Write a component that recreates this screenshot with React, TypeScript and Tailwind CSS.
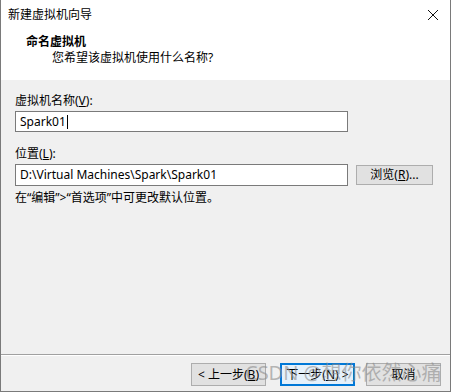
import React from 'react';

const font = { fontFamily: '"Noto Sans", "Noto Sans CJK SC", sans-serif' };

function Btn({ children, focused }: { children: React.ReactNode; focused?: boolean }) {
  return (
    <div
      className={
        'flex h-[23px] w-[75px] items-center justify-center text-[12px] text-black ' +
        (focused ? 'border-2 border-[#0078d7] bg-[#e5f1fb]' : 'border border-[#adadad] bg-[#e1e1e1]')
      }
    >
      {children}
    </div>
  );
}

export default function App() {
  return (
    <div
      className="relative flex h-[392px] w-[451px] flex-col border-x border-b border-[#7a7a7a] bg-[#f0f0f0] text-[12px] leading-[16px] text-black"
      style={font}
    >
      <div className="flex h-[80px] flex-col bg-white">
        <div className="flex h-[29px] items-center justify-between pl-[7px] pr-[10px]">
          <span>新建虚拟机向导</span>
          <svg width="12" height="12" viewBox="0 0 12 12" className="mr-[1px]">
            <path d="M1 1 L11 11 M11 1 L1 11" stroke="#111" strokeWidth="1" fill="none" />
          </svg>
        </div>
        <div className="pl-[25px] pt-[5px] font-bold">命名虚拟机</div>
        <div className="pl-[51px]">您希望该虚拟机使用什么名称?</div>
      </div>

      <div className="flex flex-1 flex-col px-[14px]">
        <div className="mt-[13px] mb-[2px]">
          虚拟机名称(<span className="underline">V</span>):
        </div>
        <div className="flex h-[21px] w-[333px] items-center border border-[#7a7a7a] bg-white px-[4px]">
          Spark01<span className="ml-[1px] inline-block h-[14px] w-px bg-black" />
        </div>

        <div className="mt-[14px] mb-[2px]">
          位置(<span className="underline">L</span>):
        </div>
        <div className="flex items-center gap-[8px]">
          <div className="flex h-[22px] w-[333px] items-center border border-[#7a7a7a] bg-white px-[4px]">
            D:\Virtual Machines\Spark\Spark01
          </div>
          <div className="flex h-[20px] w-[77px] items-center justify-center border border-[#adadad] bg-[#e1e1e1]">
            浏览(<span className="underline">R</span>)...
          </div>
        </div>
        <div className="mt-[4px]">在“编辑”&gt;“首选项”中可更改默认位置。</div>
      </div>

      <div className="border-t border-[#a0a0a0]">
        <div className="flex h-[36px] items-start border-t border-white pt-[7px] pl-[190px]">
          <Btn>
            &lt; 上一步(<span className="underline">B</span>)
          </Btn>
          <div className="ml-[14px]">
            <Btn focused>
              下一步(<span className="underline">N</span>) &gt;
            </Btn>
          </div>
          <div className="ml-[11px]">
            <Btn>取消</Btn>
          </div>
        </div>
      </div>

      <div className="pointer-events-none absolute left-[244px] top-[361px] text-[20px] leading-[24px] text-[#8c8c8c]/60">
        CSDN @想你依然心痛
      </div>
    </div>
  );
}
